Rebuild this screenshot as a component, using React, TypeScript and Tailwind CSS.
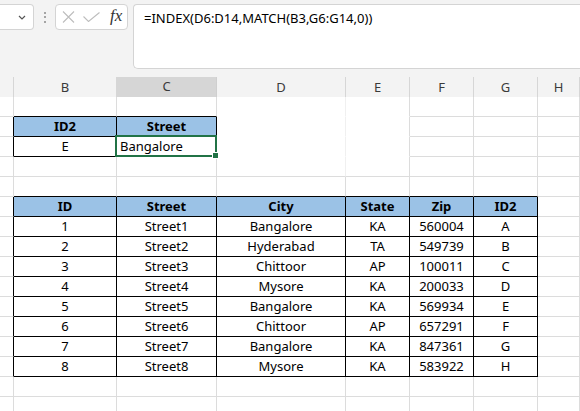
import React from 'react';

const GRID = 'grid grid-cols-[14px_103px_100px_129px_64px_64px_64px_1fr]';
const LETTERS = ['', 'B', 'C', 'D', 'E', 'F', 'G', 'H'];

const DATA: string[][] = [
  ['1', 'Street1', 'Bangalore', 'KA', '560004', 'A'],
  ['2', 'Street2', 'Hyderabad', 'TA', '549739', 'B'],
  ['3', 'Street3', 'Chittoor', 'AP', '100011', 'C'],
  ['4', 'Street4', 'Mysore', 'KA', '200033', 'D'],
  ['5', 'Street5', 'Bangalore', 'KA', '569934', 'E'],
  ['6', 'Street6', 'Chittoor', 'AP', '657291', 'F'],
  ['7', 'Street7', 'Bangalore', 'KA', '847361', 'G'],
  ['8', 'Street8', 'Mysore', 'KA', '583922', 'H'],
];

const ROWS = 16;

// which cells belong to a bordered table
const inTable = (r: number, c: number) =>
  (r >= 1 && r <= 2 && c >= 1 && c <= 2) || (r >= 5 && r <= 13 && c >= 1 && c <= 6);

const isHeader = (r: number, c: number) =>
  (r === 1 && c >= 1 && c <= 2) || (r === 5 && c >= 1 && c <= 6);

function cellText(r: number, c: number): string {
  if (r === 1) return c === 1 ? 'ID2' : c === 2 ? 'Street' : '';
  if (r === 2) return c === 1 ? 'E' : c === 2 ? 'Bangalore' : '';
  if (r === 5) return ['', 'ID', 'Street', 'City', 'State', 'Zip', 'ID2'][c] ?? '';
  if (r >= 6 && r <= 13 && c >= 1 && c <= 6) return DATA[r - 6][c - 1];
  return '';
}

function Cell({ r, c }: { r: number; c: number }) {
  const right = inTable(r, c) || inTable(r, c + 1)
    ? 'border-r-black'
    : c === 3 && r <= 3
      ? 'border-r-[#f0f0f0]'
      : 'border-r-[#dcdcdc]';
  const bottom = inTable(r, c) || inTable(r + 1, c)
    ? 'border-b-black'
    : (c === 3 || c === 4) && r <= 2
      ? 'border-b-white'
      : 'border-b-[#dcdcdc]';
  const fill = isHeader(r, c) ? 'bg-[#9bc2e6] font-bold' : 'bg-white';
  const selected = r === 2 && c === 2;
  const align = selected ? 'justify-start pl-[3px]' : 'justify-center';

  return (
    <div className={`relative h-5 border-r border-b ${right} ${bottom} ${fill} flex items-end ${align} pb-[1px] text-[13px] leading-[17px] text-black`}>
      {cellText(r, c)}
      {selected && (
        <div className="absolute left-[-2px] top-[-2px] w-[102px] h-[22px] border-2 border-[#217346] z-10">
          <div className="absolute right-[-4px] bottom-[-4px] w-[7px] h-[7px] bg-[#217346] border border-white" />
        </div>
      )}
    </div>
  );
}

export default function App() {
  return (
    <div className="w-[580px] h-[411px] overflow-hidden bg-white font-['Noto_Sans',sans-serif]">
      {/* formula bar */}
      <div className="h-[77px] bg-[#f3f3f3] flex items-start pt-[4px]">
        <div className="w-[34px] h-[26px] bg-white border border-l-0 border-[#d4d4d4] rounded-r-[4px] flex items-center justify-end pr-[7px]">
          <svg width="8" height="5" viewBox="0 0 8 5" fill="none" stroke="#555" strokeWidth="1.2">
            <path d="M1 1l3 3 3-3" />
          </svg>
        </div>
        <div className="w-[21px] h-[26px] flex flex-col items-center justify-center gap-[2.5px]">
          <span className="w-[2px] h-[2px] rounded-full bg-[#8a8a8a]" />
          <span className="w-[2px] h-[2px] rounded-full bg-[#8a8a8a]" />
          <span className="w-[2px] h-[2px] rounded-full bg-[#8a8a8a]" />
        </div>
        <div className="w-[73px] h-[26px] bg-white border border-[#d4d4d4] rounded-[4px] flex items-center pl-[6px]">
          <svg width="13" height="12" viewBox="0 0 13 12" fill="none" stroke="#bdbdbd" strokeWidth="1.1">
            <path d="M1 0.5l11 11M12 0.5l-11 11" />
          </svg>
          <svg className="ml-[8px]" width="17" height="10" viewBox="0 0 17 10" fill="none" stroke="#bdbdbd" strokeWidth="1.1">
            <path d="M0.5 4.5l5 5 11-9" />
          </svg>
          <span className="ml-[10px] font-['Liberation_Serif',serif] italic text-[17px] leading-none text-[#333] -mt-[3px]">fx</span>
        </div>
        <div className="ml-[5px] flex-1 h-[65px] bg-white border border-r-0 border-[#d4d4d4] rounded-bl-[5px] rounded-tl-[4px] pl-[10px] pt-[3px] text-[13px] text-black leading-[20px]">
          =INDEX(D6:D14,MATCH(B3,G6:G14,0))
        </div>
      </div>

      {/* column headers */}
      <div className={`${GRID} h-5 bg-[#f3f3f3]`}>
        {LETTERS.map((l, i) => (
          <div
            key={i}
            className={
              i === 2
                ? 'bg-[#d6d6d6] border-r border-r-[#cfcfcf] border-b-2 border-b-[#217346] flex items-center justify-center text-[13px] text-[#3a3a3a]'
                : 'border-r border-r-[#d6d6d6] border-b border-b-[#acacac] flex items-center justify-center text-[13px] text-[#3a3a3a]'
            }
          >
            {l}
          </div>
        ))}
      </div>

      {/* sheet */}
      <div className={GRID}>
        {Array.from({ length: ROWS }).flatMap((_, r) =>
          LETTERS.map((_, c) => <Cell key={`${r}-${c}`} r={r} c={c} />)
        )}
      </div>
    </div>
  );
}
